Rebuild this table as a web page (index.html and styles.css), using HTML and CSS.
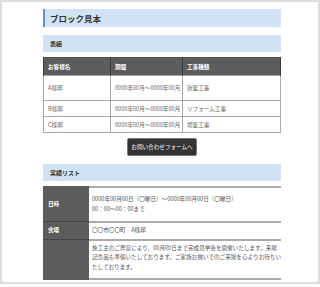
FILE: index.html
```html
<!DOCTYPE html>
<html lang="ja">
<head>
<meta charset="utf-8">
<link rel="stylesheet" href="styles.css">
</head>
<body>
<div class="frame">
  <div class="content">
    <h1 class="title">ブロック見本</h1>
    <h2 class="sub">表組</h2>
    <table class="works">
      <thead>
        <tr><th class="c1">お客様名</th><th class="c2">期間</th><th class="c3">工事種類</th></tr>
      </thead>
      <tbody>
        <tr class="tall"><td>A様邸</td><td>0000年00月～0000年00月</td><td>新築工事</td></tr>
        <tr><td>B様邸</td><td>0000年00月～0000年00月</td><td>リフォーム工事</td></tr>
        <tr><td>C様邸</td><td>0000年00月～0000年00月</td><td>増築工事</td></tr>
      </tbody>
    </table>
    <div class="btn-wrap"><a class="btn">お問い合わせフォームへ</a></div>
    <h2 class="sub">実績リスト</h2>
    <div class="dl">
      <div class="row">
        <div class="lbl">日時</div>
        <div class="val">0000年00月00日（〇曜日）～0000年00月00日（〇曜日）<br>00：00～00：00まで</div>
      </div>
      <div class="row">
        <div class="lbl">会場</div>
        <div class="val">〇〇市〇〇町　A様邸</div>
      </div>
      <div class="row">
        <div class="lbl"></div>
        <div class="val long">施工主のご厚意により、00月00日まで完成見学会を開催いたします。来場<br>記念品も準備いたしております。ご家族お揃いでのご来場を心よりお待ちい<br>たしております。</div>
      </div>
    </div>
  </div>
</div>
</body>
</html>
```
FILE: styles.css
```css
html, body {
  margin: 0;
  padding: 0;
  background: #fff;
}
body {
  font-family: "Noto Sans CJK JP", "Noto Sans", sans-serif;
  color: #444;
}
.frame {
  width: 320px;
  height: 284px;
  box-sizing: border-box;
  border: 2px solid #dedede;
  overflow: hidden;
}
.content {
  width: 238px;
  margin-left: 41px;
  padding-top: 7px;
}
.title {
  margin: 0;
  height: 18px;
  box-sizing: border-box;
  background: #d0e2f3;
  border-left: 2px solid #6a8ec2;
  padding-left: 5px;
  font-size: 8.5px;
  line-height: 18px;
  font-weight: bold;
  color: #333;
}
.sub {
  margin: 8px 0 0;
  height: 17px;
  background: #d0e2f3;
  padding-left: 7px;
  font-size: 6px;
  line-height: 17px;
  font-weight: bold;
  color: #333;
}
.works {
  margin-top: 5px;
  width: 238px;
  border-collapse: collapse;
  font-size: 5.6px;
  table-layout: fixed;
}
.works th {
  background: #5c5c5c;
  color: #fff;
  text-align: left;
  font-weight: bold;
  height: 17px;
  padding: 0 0 0 4px;
  border-left: 1px solid #3a3a3a;
  border-right: 1px solid #3a3a3a;
  border-top: 1px solid #555;
}
.works .c1 { width: 62px; }
.works .c2 { width: 67px; }
.works td {
  height: 15px;
  padding: 0 0 0 4px;
  border: 1.5px solid #a8a8a8;
  color: #666;
  white-space: nowrap;
}
.works tr.tall td { height: 24px; }
.btn-wrap {
  display: flex;
  justify-content: center;
  margin-top: 5px;
}
.btn {
  display: block;
  width: 70px;
  height: 18px;
  box-sizing: border-box;
  background: #333;
  border: 1px solid #777;
  border-radius: 2px;
  color: #fff;
  font-size: 5.6px;
  line-height: 16px;
  text-align: center;
}
.btn-wrap + .sub { margin-top: 8px; }
.dl {
  margin-top: 5px;
  font-size: 5.6px;
}
.row {
  display: flex;
}
.lbl {
  width: 46px;
  flex: none;
  background: #5c5c5c;
  color: #fff;
  font-weight: bold;
  padding-left: 5px;
  box-sizing: border-box;
  display: flex;
  align-items: center;
  border-top: 1px solid #444;
}
.row:first-child .lbl { border-top-color: #5c5c5c; }
.val {
  flex: 1;
  min-width: 0;
  border-top: 2px solid #aaa;
  padding: 7px 0 7px 3px;
  line-height: 9.5px;
  color: #555;
}
.val.long { white-space: nowrap; }
.row:nth-child(2) .val { padding: 3px 0 3px 3px; }
.row:last-child .val { border-bottom: 2px solid #aaa; padding: 3px 0 6px 3px; }
```
